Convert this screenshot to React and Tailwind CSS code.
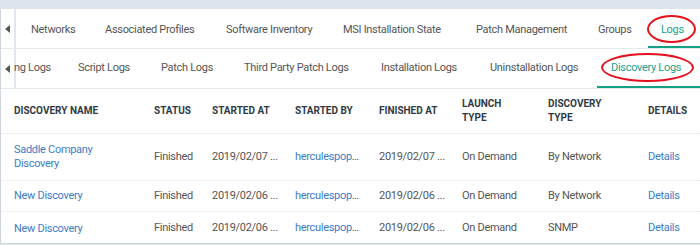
import React from 'react';

const topTabs = [
  { label: 'Networks', x: 'w-[74px]' },
  { label: 'Associated Profiles', x: 'w-[121px]' },
  { label: 'Software Inventory', x: 'w-[117px]' },
  { label: 'MSI Installation State', x: 'w-[133px]' },
  { label: 'Patch Management', x: 'w-[122px]' },
  { label: 'Groups', x: 'w-[50px]' },
];

const subTabs = [
  { label: 'ng Logs', x: 'w-[64px]' },
  { label: 'Script Logs', x: 'w-[83px]' },
  { label: 'Patch Logs', x: 'w-[83px]' },
  { label: 'Third Party Patch Logs', x: 'w-[137px]' },
  { label: 'Installation Logs', x: 'w-[109px]' },
  { label: 'Uninstallation Logs', x: 'w-[107px]' },
];

const rows = [
  { name: ['Saddle Company', 'Discovery'], started: '2019/02/07 ...', finished: '2019/02/07 ...', type: 'By Network', h: 'h-[47px]' },
  { name: ['New Discovery'], started: '2019/02/06 ...', finished: '2019/02/06 ...', type: 'By Network', h: 'h-[31px]' },
  { name: ['New Discovery'], started: '2019/02/06 ...', finished: '2019/02/06 ...', type: 'SNMP', h: 'h-[31px] pt-[2px]' },
];

function ScrollArrow() {
  return (
    <div className="w-[15px] h-full flex items-center justify-center border-r-2 border-[#e4e7ea] shrink-0">
      <svg width="5" height="8" viewBox="0 0 5 8"><path d="M5 0 L0 4 L5 8 Z" fill="#555" /></svg>
    </div>
  );
}

export default function App() {
  return (
    <div className="w-[700px] h-[245px] bg-[#dde4ec] pt-[9px] overflow-hidden" style={{ fontFamily: 'Roboto, "Liberation Sans", sans-serif' }}>
      <div className="bg-white h-[235px] border-l border-b border-[#cfd6de] text-[11px] tracking-[-0.3px]">
        {/* top tabs */}
        <div className="h-[40px] flex items-center border-b border-[#e6e9ec]">
          <ScrollArrow />
          <div className="flex items-center pl-[15px] text-[#555] h-full">
            {topTabs.map((t) => (
              <div key={t.label} className={`${t.x} shrink-0 whitespace-nowrap pt-[3px]`}>{t.label}</div>
            ))}
            <div className="relative h-full w-[52px] flex items-center pl-[13px] pt-[3px] text-[#23a08c]">
              Logs
              <div className="absolute left-0 right-0 bottom-0 h-[2px] bg-[#13a083]" />
              <div className="absolute left-[-1px] top-[6px] w-[49px] h-[28px] rounded-[50%] border-2 border-[#e3111b]" />
            </div>
          </div>
        </div>
        {/* sub tabs */}
        <div className="h-[40px] flex items-center border-b border-[#e6e9ec]">
          <ScrollArrow />
          <div className="flex items-center text-[#555] -ml-[2px] h-full">
            {subTabs.map((t) => (
              <div key={t.label} className={`${t.x} shrink-0 whitespace-nowrap`}>{t.label}</div>
            ))}
            <div className="relative h-full w-[104px] flex items-center pl-[14px] text-[#23a08c]">
              Discovery Logs
              <div className="absolute left-0 right-0 bottom-0 h-[2px] bg-[#13a083]" />
              <div className="absolute left-[4px] top-[4px] w-[93px] h-[29px] rounded-[50%] border-2 border-[#e3111b]" />
            </div>
          </div>
        </div>
        {/* table header */}
        <div className="h-[45px] flex items-center text-[10px] tracking-normal font-bold text-[#2f3a45] uppercase border-b border-dotted border-[#e8e0d8] leading-[14px]">
          <div className="w-[153px] pl-[13px]">Discovery Name</div>
          <div className="w-[58px]">Status</div>
          <div className="w-[83px]">Started At</div>
          <div className="w-[84px]">Started By</div>
          <div className="w-[83px]">Finished At</div>
          <div className="w-[86px]">Launch<br />Type</div>
          <div className="w-[100px]">Discovery<br />Type</div>
          <div>Details</div>
        </div>
        {rows.map((r, i) => (
          <div key={i} className={`${r.h} flex items-center text-[#555] ${i < 2 ? 'border-b border-dotted border-[#dde3ea]' : ''}`}>
            <div className="w-[153px] pl-[13px] text-[#3d7cc6] leading-[14px]">
              {r.name.map((n) => <div key={n}>{n}</div>)}
            </div>
            <div className="w-[58px]">Finished</div>
            <div className="w-[83px]">{r.started}</div>
            <div className="w-[84px] text-[#3d7cc6] whitespace-nowrap">herculespop<span className="text-[#555]">…</span></div>
            <div className="w-[83px]">{r.finished}</div>
            <div className="w-[86px]">On Demand</div>
            <div className="w-[100px]">{r.type}</div>
            <div className="text-[#3d7cc6]">Details</div>
          </div>
        ))}
      </div>
    </div>
  );
}
